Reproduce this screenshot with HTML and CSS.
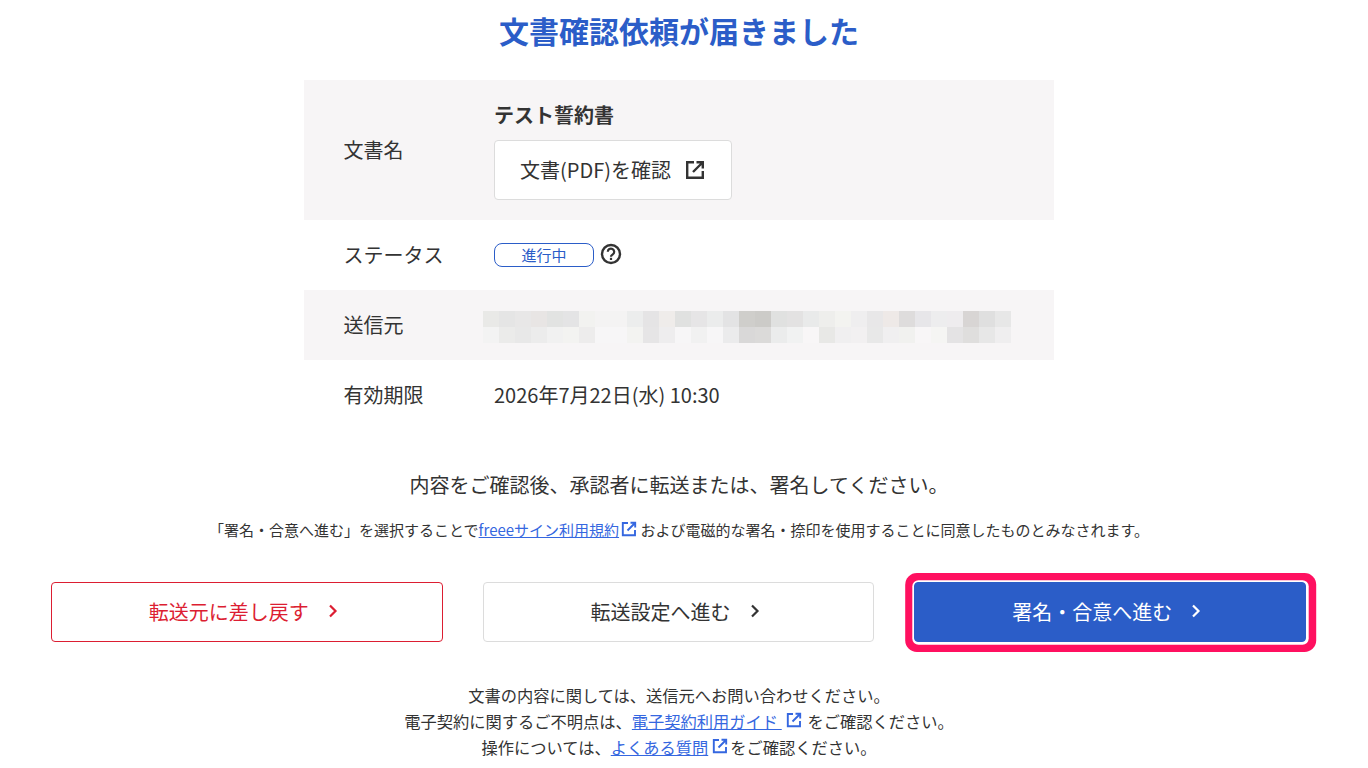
FILE: index.html
```html
<!DOCTYPE html>
<html lang="ja">
<head>
<meta charset="utf-8">
<title>文書確認依頼が届きました</title>
<link rel="stylesheet" href="styles.css">
</head>
<body>
<main class="page">
  <h1 class="title">文書確認依頼が届きました</h1>
  <div class="info">
    <div class="row row-doc shaded">
      <div class="label">文書名</div>
      <div class="value doc">
        <div class="doc-name">テスト誓約書</div>
        <a class="doc-btn">文書(PDF)を確認
          <svg class="ext-lg" viewBox="0 0 24 24" width="24" height="24"><path d="M11 4.200H4.200v15.600H19.800V13" fill="none" stroke="#333" stroke-width="2.400"/><path d="M10 14 19.500 4.500M13.500 4.200H19.800v6.300" fill="none" stroke="#333" stroke-width="2.400"/></svg>
        </a>
      </div>
    </div>
    <div class="row row-mid">
      <div class="label">ステータス</div>
      <div class="value status">
        <span class="badge">進行中</span>
        <svg class="help" viewBox="0 0 22 22" width="22" height="22"><circle cx="11" cy="11" r="9" fill="none" stroke="#333" stroke-width="2.400"/><path d="M7.800 8.800a3.200 3.200 0 1 1 5 2.600c-1.200.8-1.800 1.200-1.800 2.300" fill="none" stroke="#333" stroke-width="2.200"/><rect x="9.900" y="14.800" width="2.200" height="2.200" fill="#333"/></svg>
      </div>
    </div>
    <div class="row row-mid shaded">
      <div class="label">送信元</div>
      <div class="value mosaic-cell">
        <svg class="mosaic" width="528" height="32" viewBox="0 0 33 2" shape-rendering="crispEdges">
          <g>
            <rect x="0" y="0" width="1" height="1" fill="#e9e9e7"/><rect x="1" y="0" width="1" height="1" fill="#e5e5e5"/><rect x="2" y="0" width="1" height="1" fill="#e8e7e7"/><rect x="3" y="0" width="1" height="1" fill="#e8e5e4"/><rect x="4" y="0" width="1" height="1" fill="#e2e3e2"/><rect x="5" y="0" width="1" height="1" fill="#e4e4e5"/><rect x="6" y="0" width="1" height="1" fill="#f2f2f0"/><rect x="7" y="0" width="1" height="1" fill="#f4f3f3"/><rect x="8" y="0" width="1" height="1" fill="#f4f3f3"/><rect x="9" y="0" width="1" height="1" fill="#eceded"/><rect x="10" y="0" width="1" height="1" fill="#e5e4e5"/><rect x="11" y="0" width="1" height="1" fill="#efecea"/><rect x="12" y="0" width="1" height="1" fill="#e0e1e0"/><rect x="13" y="0" width="1" height="1" fill="#e6e5e6"/><rect x="14" y="0" width="1" height="1" fill="#ebecec"/><rect x="15" y="0" width="1" height="1" fill="#e3e3e4"/><rect x="16" y="0" width="1" height="1" fill="#cfcecb"/><rect x="17" y="0" width="1" height="1" fill="#cccbc8"/><rect x="18" y="0" width="1" height="1" fill="#e0e1e0"/><rect x="19" y="0" width="1" height="1" fill="#e3e2e2"/><rect x="20" y="0" width="1" height="1" fill="#e9eaea"/><rect x="21" y="0" width="1" height="1" fill="#eeeeec"/><rect x="22" y="0" width="1" height="1" fill="#f3f3f0"/><rect x="23" y="0" width="1" height="1" fill="#efeeef"/><rect x="24" y="0" width="1" height="1" fill="#e8e7e8"/><rect x="25" y="0" width="1" height="1" fill="#eee9e7"/><rect x="26" y="0" width="1" height="1" fill="#dedcdc"/><rect x="27" y="0" width="1" height="1" fill="#e7e6e9"/><rect x="28" y="0" width="1" height="1" fill="#ededee"/><rect x="29" y="0" width="1" height="1" fill="#eeecee"/><rect x="30" y="0" width="1" height="1" fill="#d8d5d4"/><rect x="31" y="0" width="1" height="1" fill="#dfdfdf"/><rect x="32" y="0" width="1" height="1" fill="#e7e7e7"/>
          </g>
          <g>
            <rect x="0" y="1" width="1" height="1" fill="#f3f3f3"/><rect x="1" y="1" width="1" height="1" fill="#ebebea"/><rect x="2" y="1" width="1" height="1" fill="#e8e8e8"/><rect x="3" y="1" width="1" height="1" fill="#ececec"/><rect x="4" y="1" width="1" height="1" fill="#f1f1f1"/><rect x="5" y="1" width="1" height="1" fill="#f3f3f1"/><rect x="6" y="1" width="1" height="1" fill="#edecec"/><rect x="7" y="1" width="1" height="1" fill="#f7f6f7"/><rect x="8" y="1" width="1" height="1" fill="#f7f6f7"/><rect x="9" y="1" width="1" height="1" fill="#f3f3f1"/><rect x="10" y="1" width="1" height="1" fill="#e6e5e6"/><rect x="11" y="1" width="1" height="1" fill="#eeedee"/><rect x="12" y="1" width="1" height="1" fill="#f7f6f7"/><rect x="13" y="1" width="1" height="1" fill="#f1f1f1"/><rect x="14" y="1" width="1" height="1" fill="#f7f6f7"/><rect x="15" y="1" width="1" height="1" fill="#ebebec"/><rect x="16" y="1" width="1" height="1" fill="#d9d8d8"/><rect x="17" y="1" width="1" height="1" fill="#dbdad9"/><rect x="18" y="1" width="1" height="1" fill="#ebecec"/><rect x="19" y="1" width="1" height="1" fill="#f1f2f2"/><rect x="20" y="1" width="1" height="1" fill="#f8f6f7"/><rect x="21" y="1" width="1" height="1" fill="#e8e8e6"/><rect x="22" y="1" width="1" height="1" fill="#f0eff0"/><rect x="23" y="1" width="1" height="1" fill="#f2f0f1"/><rect x="24" y="1" width="1" height="1" fill="#e8e8e8"/><rect x="25" y="1" width="1" height="1" fill="#f0eff0"/><rect x="26" y="1" width="1" height="1" fill="#f1f1ef"/><rect x="27" y="1" width="1" height="1" fill="#f8f6f7"/><rect x="28" y="1" width="1" height="1" fill="#f5f5f3"/><rect x="29" y="1" width="1" height="1" fill="#e4e3e4"/><rect x="30" y="1" width="1" height="1" fill="#dfdedd"/><rect x="31" y="1" width="1" height="1" fill="#e7e7e7"/><rect x="32" y="1" width="1" height="1" fill="#efeeef"/>
          </g>
        </svg>
      </div>
    </div>
    <div class="row row-mid">
      <div class="label">有効期限</div>
      <div class="value">2026年7月22日(水) 10:30</div>
    </div>
  </div>

  <p class="lead">内容をご確認後、承認者に転送または、署名してください。</p>
  <p class="note">「署名・合意へ進む」を選択することで<a class="link">freeeサイン利用規約</a><svg class="ext ext-note" viewBox="0 0 16 16" width="16" height="16"><use href="#ext-icon"/></svg> および電磁的な署名・捺印を使用することに同意したものとみなされます。</p>

  <div class="actions">
    <a class="btn btn-red">転送元に差し戻す<svg class="chev" viewBox="0 0 12 14" width="12" height="14"><path d="M3 1.500 8.500 7 3 12.500" fill="none" stroke="currentColor" stroke-width="2.200"/></svg></a>
    <a class="btn btn-plain">転送設定へ進む<svg class="chev" viewBox="0 0 12 14" width="12" height="14"><path d="M3 1.500 8.500 7 3 12.500" fill="none" stroke="currentColor" stroke-width="2.200"/></svg></a>
    <a class="btn btn-primary">署名・合意へ進む<svg class="chev" viewBox="0 0 12 14" width="12" height="14"><path d="M3 1.500 8.500 7 3 12.500" fill="none" stroke="currentColor" stroke-width="2.200"/></svg></a>
  </div>

  <div class="foot">
    <p>文書の内容に関しては、送信元へお問い合わせください。</p>
    <p>電子契約に関するご不明点は、<a class="link">電子契約利用ガイド </a><svg class="ext ext-foot" viewBox="0 0 16 16" width="16" height="16"><use href="#ext-icon"/></svg> をご確認ください。</p>
    <p>操作については、<a class="link">よくある質問</a><svg class="ext ext-foot" viewBox="0 0 16 16" width="16" height="16"><use href="#ext-icon"/></svg>をご確認ください。</p>
  </div>
</main>
<svg class="defs" width="0" height="0"><defs><g id="ext-icon" fill="none" stroke="#3567e0" stroke-width="1.900"><path d="M7 2H1.800v12.200H14V9"/><path d="M6.500 9.500 14 2M9.500 1.800h4.700v4.700"/></g></defs></svg>
</body>
</html>
```
FILE: styles.css
```css
* { box-sizing: border-box; }
html, body { margin: 0; padding: 0; background: #fff; overflow: hidden; }
body {
  font-family: "Noto Sans CJK JP", "Noto Sans", sans-serif;
  color: #333;
  height: 768px;
}
p { margin: 0; }
.page {
  width: 1358px;
  display: flex;
  flex-direction: column;
  align-items: center;
}
.title {
  margin: 0;
  height: 80px;
  padding-top: 8px;
  font-size: 30px;
  line-height: 44px;
  font-weight: 700;
  color: #2b5dc8;
}
.info { width: 750px; }
.row { display: flex; align-items: center; padding-left: 39.5px; font-size: 20px; line-height: 30px; }
.row-doc { height: 140px; }
.row-mid { height: 70px; }
.shaded { background: #f7f5f6; }
.label { width: 150.5px; flex: none; }
.value { flex: 1; }
.doc-name { font-weight: 700; line-height: 30px; margin-bottom: 10px; }
.doc-btn {
  display: flex; align-items: center; justify-content: center; gap: 12px;
  width: 238px; height: 60px; padding-left: 1px;
  background: #fff; border: 1px solid #dcdcdc; border-radius: 4px;
}
.status { display: flex; align-items: center; gap: 6px; padding-bottom: 1px; }
.badge {
  width: 100px; height: 24px;
  border: 1px solid #2b5dc8; border-radius: 8px;
  color: #2b5dc8; background: #fff;
  font-size: 15px; line-height: 22px; text-align: center;
}
.help { margin-top: -1px; }
.mosaic { display: block; margin-left: -11px; margin-top: 4px; }
.lead { margin-top: 37px; font-size: 20px; line-height: 36px; }
.note { margin-top: 15px; font-size: 15px; line-height: 24px; }
.link { color: #3567e0; text-decoration: underline; }
.ext { vertical-align: -1px; margin-left: 2px; }
.ext-foot { margin: 0 2px 0 4px; vertical-align: 0; }
.defs { position: absolute; }
.actions {
  display: flex; gap: 40px; margin-top: 40px;
  width: 1255px; margin-right: 1px;
}
.btn {
  flex: 1; height: 60px; padding: 0 6px 2px 0;
  display: flex; align-items: center; justify-content: center; gap: 12px;
  font-size: 20px; border-radius: 4px; background: #fff;
  border: 1px solid #dcdcdc;
}
.btn-red { color: #dc1e32; border-color: #dc1e32; }
.btn-primary {
  background: #2b5dc8; border-color: #2b5dc8; color: #fff;
  box-shadow: 0.5px 0.5px 0 2.2px #fff, 0.7px 0.5px 0 9.5px #ff1060;
}
.chev { flex: none; margin-left: 6px; }
.foot { margin-top: 40px; text-align: center; font-size: 16.25px; line-height: 26px; }
```
